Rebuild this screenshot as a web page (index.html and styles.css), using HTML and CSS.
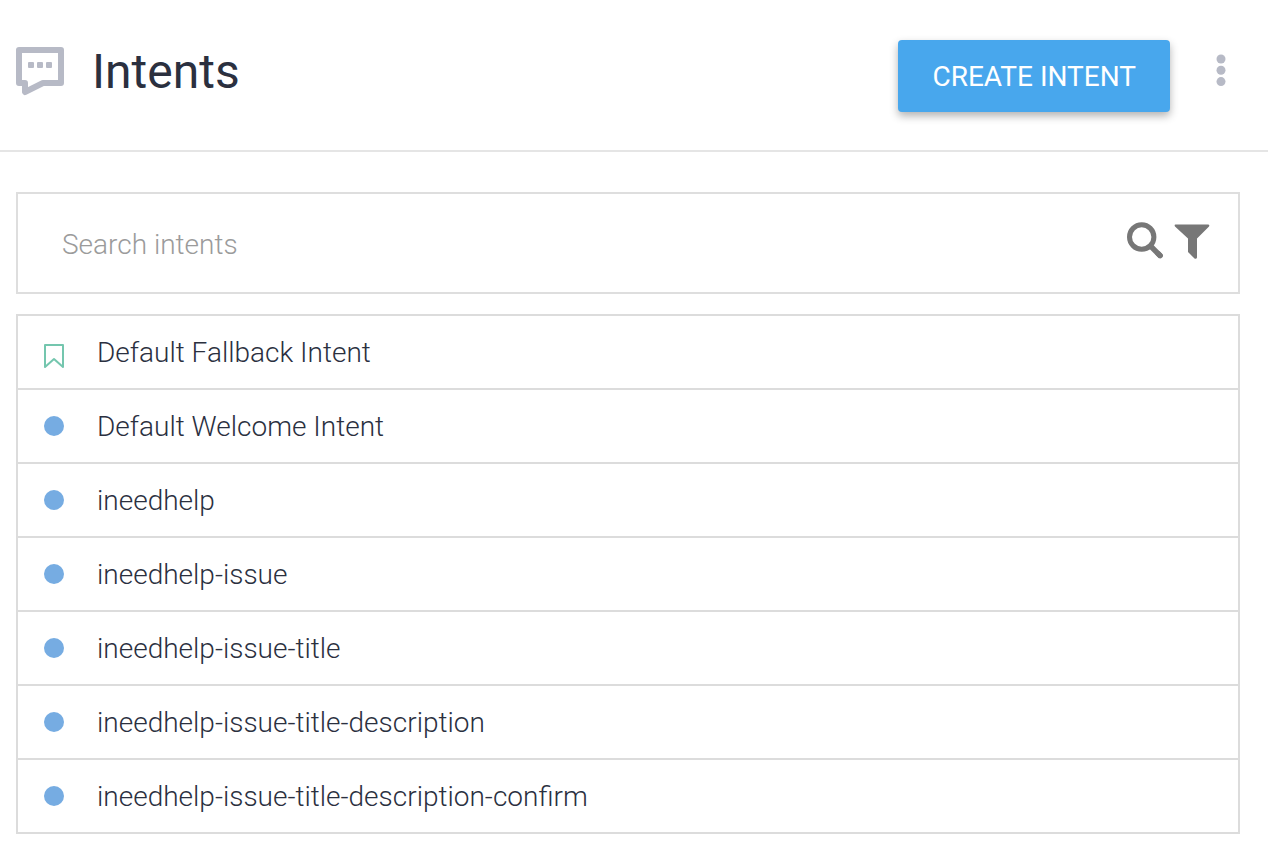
FILE: index.html
```html
<!DOCTYPE html>
<html lang="en">
<head>
<meta charset="utf-8">
<meta name="viewport" content="width=device-width, initial-scale=1">
<title>Intents</title>
<link rel="stylesheet" href="styles.css">
</head>
<body>
<header class="header">
  <svg class="header-icon" viewBox="0 0 48 48" aria-hidden="true">
    <path d="M3 3H45V36H27L9 45V36H3Z" fill="none" stroke="currentColor" stroke-width="6" stroke-linejoin="round"/>
    <g fill="currentColor"><rect x="12" y="15" width="6" height="6" rx="1"/><rect x="21" y="15" width="6" height="6" rx="1"/><rect x="30" y="15" width="6" height="6" rx="1"/></g>
  </svg>
  <h1 class="title">Intents</h1>
  <button class="create" type="button">CREATE INTENT</button>
  <button class="menu" type="button" aria-label="More options">
    <svg class="menu-icon" viewBox="0 0 10 32" fill="currentColor" aria-hidden="true"><circle cx="5" cy="5" r="4.500"/><circle cx="5" cy="16.300" r="4.500"/><circle cx="5" cy="27.600" r="4.500"/></svg>
  </button>
</header>
<main class="content">
  <form class="search" role="search">
    <input class="search-input" type="text" aria-label="Search intents" placeholder="Search intents">
    <button class="tool" type="button" aria-label="Search">
      <svg class="tool-icon" viewBox="0 0 36 36" aria-hidden="true"><circle cx="15.700" cy="15" r="12.200" fill="none" stroke="currentColor" stroke-width="5"/><path d="M24 23.500L34.800 34.300" fill="none" stroke="currentColor" stroke-width="5.400"/><path d="M32 31.500L34.200 33.700" fill="none" stroke="currentColor" stroke-width="5.400" stroke-linecap="round"/></svg>
    </button>
    <button class="tool" type="button" aria-label="Filter">
      <svg class="tool-icon" viewBox="0 0 36 36" aria-hidden="true"><path d="M1.500 2.500H34Q36 2.800 35 4.500L23 16.500V35.500Q22.500 37.500 20.500 36.500L14 30V16.500L1 4.500Q0 2.800 1.500 2.500Z" fill="currentColor"/></svg>
    </button>
  </form>
  <ul class="intents">
    <li class="intent"><svg class="bookmark" viewBox="0 0 20 24" aria-hidden="true"><path d="M1 1H19V23L10 15L1 23Z" fill="none" stroke="currentColor" stroke-width="2" stroke-linejoin="round"/></svg><a class="name" href="#">Default Fallback Intent</a></li>
    <li class="intent"><span class="dot"></span><a class="name" href="#">Default Welcome Intent</a></li>
    <li class="intent"><span class="dot"></span><a class="name" href="#">ineedhelp</a></li>
    <li class="intent"><span class="dot"></span><a class="name" href="#">ineedhelp-issue</a></li>
    <li class="intent"><span class="dot"></span><a class="name" href="#">ineedhelp-issue-title</a></li>
    <li class="intent"><span class="dot"></span><a class="name" href="#">ineedhelp-issue-title-description</a></li>
    <li class="intent"><span class="dot"></span><a class="name" href="#">ineedhelp-issue-title-description-confirm</a></li>
  </ul>
</main>
</body>
</html>
```
FILE: styles.css
```css
* {
  box-sizing: border-box;
}

body {
  margin: 0;
  background: #fff;
  color: #2b303f;
  font-family: Roboto, "Liberation Sans", sans-serif;
  font-size: 28px;
  font-weight: 300;
  line-height: 32px;
}

button,
input {
  font: inherit;
  border: 0;
  padding: 0;
  background: none;
}

button {
  cursor: pointer;
}

svg {
  display: block;
  overflow: visible;
}

.header {
  display: flex;
  align-items: flex-start;
  padding: 40px 40px 38px 16px;
  border-bottom: 2px solid #e5e5e5;
}

.header-icon {
  width: 48px;
  height: 48px;
  margin-top: 7px;
  color: #b7bac6;
}

.title {
  flex: 1;
  margin: 0;
  padding-left: 28px;
  color: #2b303f;
  font-size: 48px;
  font-weight: 400;
  line-height: 64px;
}

.create {
  padding: 21px 34px 19px;
  border-radius: 4px;
  background: #48a7ed;
  color: #fff;
  font-weight: 400;
  box-shadow: 0 4px 8px rgba(0, 0, 0, 0.3);
}

.menu {
  margin-left: 46px;
  padding: 14px 2px 0 0;
  color: #b7bac6;
}

.menu-icon {
  width: 10px;
  height: 32px;
}

.content {
  padding: 40px 28px 24px 16px;
}

.search {
  display: flex;
  align-items: flex-start;
  gap: 12px;
  padding: 28px 28px 28px 44px;
  border: 2px solid #dedede;
}

.search-input {
  flex: 1;
  min-width: 0;
  height: 42px;
  padding-top: 2px;
  outline: none;
  color: #2b303f;
}

.search-input::placeholder {
  color: #9b9b9b;
  opacity: 1;
}

.tool {
  color: #777;
}

.tool-icon {
  width: 36px;
  height: 36px;
}

.intents {
  margin: 20px 0 0;
  padding: 0;
  border: 2px solid #dcdcdc;
  list-style: none;
}

.intent {
  display: flex;
  align-items: center;
  gap: 33px;
  padding: 19px 26px;
}

.intent + .intent {
  border-top: 2px solid #dcdcdc;
}

.bookmark {
  width: 20px;
  height: 24px;
  margin-top: 8px;
  color: #74c6ae;
}

.dot {
  width: 20px;
  height: 20px;
  border-radius: 50%;
  background: #76ace2;
}

.name {
  padding-top: 2px;
  color: inherit;
  text-decoration: none;
}
```
